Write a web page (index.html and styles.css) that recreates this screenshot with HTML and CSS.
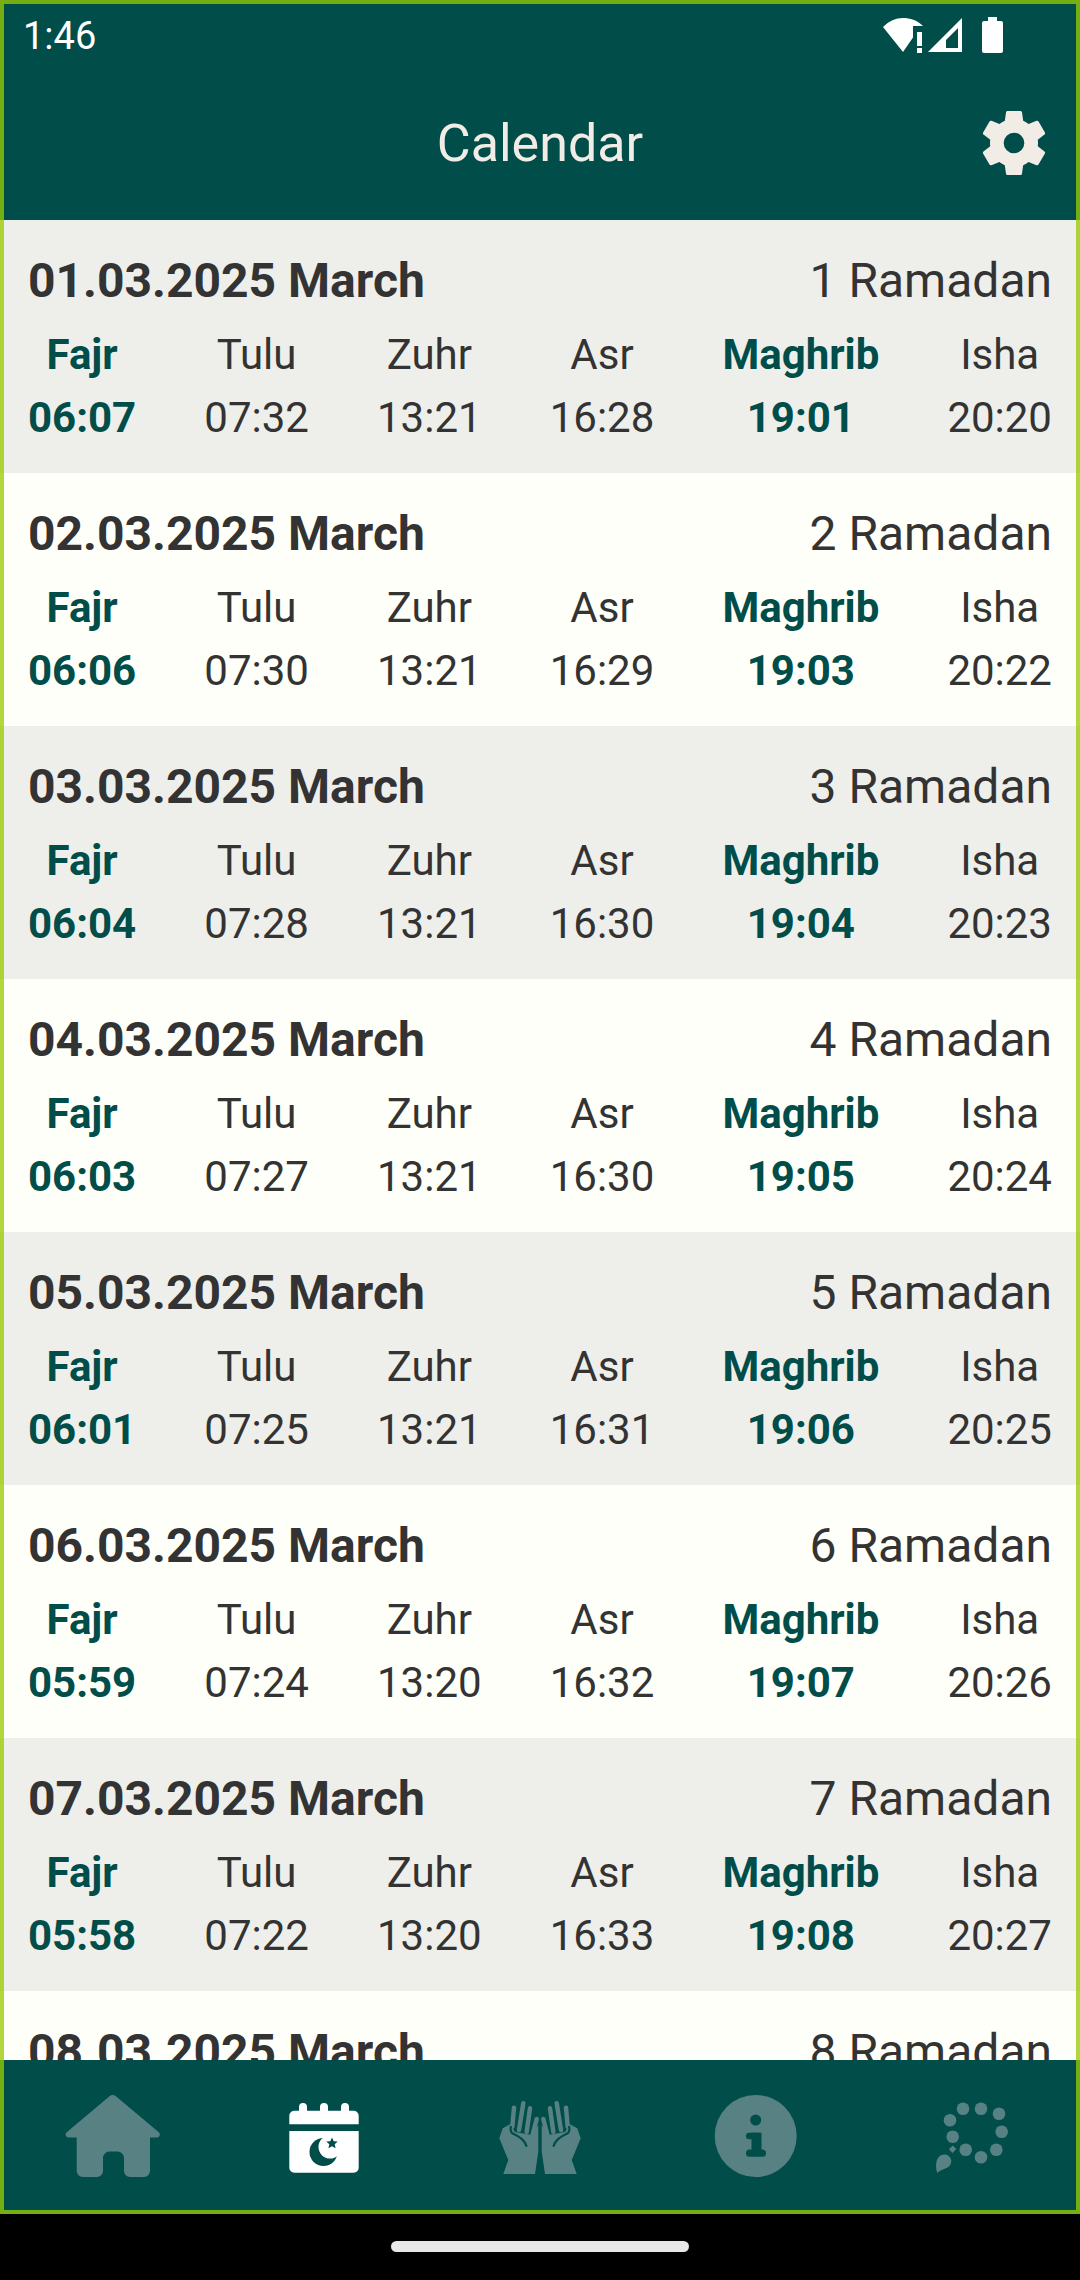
FILE: index.html
```html
<!DOCTYPE html>
<html>
<head>
    <title>Calendar</title>
    <link rel="stylesheet" href="styles.css">
</head>
<body>
    <div class="screen">
        <div class="app">
            <div class="topbar">
                <div class="status">
                    <span class="clock">1:46</span>
                    <div class="status-icons">
                        <svg width="40" height="36" viewBox="0 0 40 36"><path d="M0 10C6 4 13 1 20 1c7 0 14 2 20 8H30v11.500L20 35z" fill="#fff"/><rect x="34" y="15" width="5" height="14" fill="#fff"/><rect x="34" y="31" width="5" height="5" fill="#fff"/></svg>
                        <svg class="signal" width="34" height="36" viewBox="0 0 34 36"><path d="M0 35L34 1v34zM18 31h12V11L18 23z" fill="#fff" fill-rule="evenodd"/></svg>
                        <svg class="battery" width="21" height="36" viewBox="0 0 21 36"><path d="M6 0h9v4h4a2 2 0 0 1 2 2v28a2 2 0 0 1-2 2H2a2 2 0 0 1-2-2V6a2 2 0 0 1 2-2h4z" fill="#fff"/></svg>
                    </div>
                </div>
                <div class="titlebar">
                    <h1>Calendar</h1>
                    <svg class="gear" width="80" height="80" viewBox="0 0 24 24"><path fill-rule="evenodd" d="M19.140 12.940c.04-.3.06-.61.06-.94 0-.32-.02-.64-.07-.94l2.030-1.580c.18-.14.23-.41.12-.61l-1.920-3.320c-.12-.22-.37-.29-.59-.22l-2.390.96c-.5-.38-1.030-.7-1.620-.94l-.36-2.540c-.04-.24-.24-.41-.48-.41h-3.840c-.24 0-.43.17-.47.41l-.36 2.540c-.59.24-1.130.57-1.620.94l-2.390-.96c-.22-.08-.47 0-.59.22L2.740 8.870c-.12.21-.08.47.12.61l2.030 1.580c-.05.3-.09.63-.09.94s.02.64.07.94l-2.030 1.580c-.18.14-.23.41-.12.61l1.920 3.320c.12.22.37.29.59.22l2.390-.96c.5.38 1.030.7 1.620.94l.36 2.540c.05.24.24.41.48.41h3.840c.24 0 .44-.17.47-.41l.36-2.540c.59-.24 1.130-.56 1.620-.94l2.390.96c.22.08.47 0 .59-.22l1.920-3.320c.12-.22.07-.47-.12-.61l-2.010-1.580zM12 15.100a3.100 3.100 0 1 1 0-6.200 3.100 3.100 0 0 1 0 6.200z"/></svg>
                </div>
            </div>

            <div class="list">
                <div class="day">
                    <div class="day-head"><b>01.03.2025 March</b><span>1 Ramadan</span></div>
                    <div class="times">
                        <div class="time on"><span>Fajr</span><span>06:07</span></div>
                        <div class="time"><span>Tulu</span><span>07:32</span></div>
                        <div class="time"><span>Zuhr</span><span>13:21</span></div>
                        <div class="time"><span>Asr</span><span>16:28</span></div>
                        <div class="time on"><span>Maghrib</span><span>19:01</span></div>
                        <div class="time"><span>Isha</span><span>20:20</span></div>
                    </div>
                </div>
                <div class="day">
                    <div class="day-head"><b>02.03.2025 March</b><span>2 Ramadan</span></div>
                    <div class="times">
                        <div class="time on"><span>Fajr</span><span>06:06</span></div>
                        <div class="time"><span>Tulu</span><span>07:30</span></div>
                        <div class="time"><span>Zuhr</span><span>13:21</span></div>
                        <div class="time"><span>Asr</span><span>16:29</span></div>
                        <div class="time on"><span>Maghrib</span><span>19:03</span></div>
                        <div class="time"><span>Isha</span><span>20:22</span></div>
                    </div>
                </div>
                <div class="day">
                    <div class="day-head"><b>03.03.2025 March</b><span>3 Ramadan</span></div>
                    <div class="times">
                        <div class="time on"><span>Fajr</span><span>06:04</span></div>
                        <div class="time"><span>Tulu</span><span>07:28</span></div>
                        <div class="time"><span>Zuhr</span><span>13:21</span></div>
                        <div class="time"><span>Asr</span><span>16:30</span></div>
                        <div class="time on"><span>Maghrib</span><span>19:04</span></div>
                        <div class="time"><span>Isha</span><span>20:23</span></div>
                    </div>
                </div>
                <div class="day">
                    <div class="day-head"><b>04.03.2025 March</b><span>4 Ramadan</span></div>
                    <div class="times">
                        <div class="time on"><span>Fajr</span><span>06:03</span></div>
                        <div class="time"><span>Tulu</span><span>07:27</span></div>
                        <div class="time"><span>Zuhr</span><span>13:21</span></div>
                        <div class="time"><span>Asr</span><span>16:30</span></div>
                        <div class="time on"><span>Maghrib</span><span>19:05</span></div>
                        <div class="time"><span>Isha</span><span>20:24</span></div>
                    </div>
                </div>
                <div class="day">
                    <div class="day-head"><b>05.03.2025 March</b><span>5 Ramadan</span></div>
                    <div class="times">
                        <div class="time on"><span>Fajr</span><span>06:01</span></div>
                        <div class="time"><span>Tulu</span><span>07:25</span></div>
                        <div class="time"><span>Zuhr</span><span>13:21</span></div>
                        <div class="time"><span>Asr</span><span>16:31</span></div>
                        <div class="time on"><span>Maghrib</span><span>19:06</span></div>
                        <div class="time"><span>Isha</span><span>20:25</span></div>
                    </div>
                </div>
                <div class="day">
                    <div class="day-head"><b>06.03.2025 March</b><span>6 Ramadan</span></div>
                    <div class="times">
                        <div class="time on"><span>Fajr</span><span>05:59</span></div>
                        <div class="time"><span>Tulu</span><span>07:24</span></div>
                        <div class="time"><span>Zuhr</span><span>13:20</span></div>
                        <div class="time"><span>Asr</span><span>16:32</span></div>
                        <div class="time on"><span>Maghrib</span><span>19:07</span></div>
                        <div class="time"><span>Isha</span><span>20:26</span></div>
                    </div>
                </div>
                <div class="day">
                    <div class="day-head"><b>07.03.2025 March</b><span>7 Ramadan</span></div>
                    <div class="times">
                        <div class="time on"><span>Fajr</span><span>05:58</span></div>
                        <div class="time"><span>Tulu</span><span>07:22</span></div>
                        <div class="time"><span>Zuhr</span><span>13:20</span></div>
                        <div class="time"><span>Asr</span><span>16:33</span></div>
                        <div class="time on"><span>Maghrib</span><span>19:08</span></div>
                        <div class="time"><span>Isha</span><span>20:27</span></div>
                    </div>
                </div>
                <div class="day">
                    <div class="day-head"><b>08.03.2025 March</b><span>8 Ramadan</span></div>
                </div>
            </div>

            <div class="tabs">
                <svg class="tab" width="110" height="100" viewBox="0 0 110 100"><path d="M56.500 11.300a5 5 0 0 1 6.400 0L105.500 47a3 3 0 0 1-2 5.500H97V86a6 6 0 0 1-6 6H77a6 6 0 0 1-6-6V73a6.500 6.500 0 0 0-6.500-6.500h-8A6.500 6.500 0 0 0 50 73v13a6 6 0 0 1-6 6H29.700a6 6 0 0 1-6-6V52.500H16a3 3 0 0 1-2-5.500z"/></svg>
                <svg class="tab active" width="110" height="100" viewBox="0 0 110 100">
                    <path d="M30 25.700V22a4 4 0 0 1 8 0v3.700h13V22a4 4 0 0 1 8 0v3.700h13V22a4 4 0 0 1 8 0v3.700h4.700a5 5 0 0 1 5 5v8.600H20.300v-8.600a5 5 0 0 1 5-5zM20.300 46h69.400v36.700a5 5 0 0 1-5 5H25.300a5 5 0 0 1-5-5z"/>
                    <circle cx="54.500" cy="67" r="14" fill="#004d4a"/>
                    <circle cx="61" cy="62" r="11.500"/>
                    <path d="M63 52.500l1.700 3.700 4 .4-3 2.700.9 4-3.600-2.100-3.600 2.100.9-4-3-2.700 4-.4z" fill="#004d4a"/>
                </svg>
                <svg class="tab" width="110" height="100" viewBox="0 0 110 100">
                    <g id="hand">
                        <path d="M56.700 40v26.700L60 89h31.700l-5-14 9-21.700-3.400-10L85 39.300 80 47l-17 3z"/>
                        <path class="finger" d="M58.300 34l5 19.300M65 23.300l3.300 23.400M71.700 18.300L76 45M81 22.700l1.700 19"/>
                        <path class="crease" d="M68.300 61.700C71 53 78 51 83 48c2-2 1.500-5 1-7"/>
                    </g>
                    <use href="#hand" transform="translate(110 0) scale(-1 1)"/>
                </svg>
                <svg class="tab" width="110" height="100" viewBox="0 0 110 100">
                    <circle cx="54.700" cy="51" r="41"/>
                    <g fill="#004d4a">
                        <circle cx="54.700" cy="35" r="5.500"/>
                        <rect x="45" y="47.700" width="15" height="6.500" rx="3"/>
                        <rect x="50.500" y="47.700" width="10" height="22"/>
                        <rect x="45" y="64.500" width="20" height="7.200" rx="3.500"/>
                    </g>
                </svg>
                <svg class="tab" width="110" height="100" viewBox="0 0 110 100">
                    <circle cx="46" cy="23.700" r="6.300"/>
                    <circle cx="64" cy="23.700" r="6.300"/>
                    <circle cx="82" cy="28.700" r="6.300"/>
                    <circle cx="84.700" cy="46.700" r="6.300"/>
                    <circle cx="79.300" cy="64.700" r="6.300"/>
                    <circle cx="64" cy="72.300" r="6.300"/>
                    <circle cx="48.700" cy="64.700" r="6.300"/>
                    <circle cx="35.700" cy="51.700" r="6.300"/>
                    <circle cx="33" cy="35.300" r="6.300"/>
                    <path d="M35.700 60.500l3.600 3.600-3.800 3.800-3.600-3.600z"/>
                    <path d="M20.300 88c-2-6-1.500-12 1-15.500 2.500-3.500 8-4 11-1 3 3 2.500 8-1 10.500-3 2-7 2.500-11 6z"/>
                </svg>
            </div>
        </div>
        <div class="gesture-bar"><div class="pill"></div></div>
        <div class="frame"></div>
    </div>
</body>
</html>
```
FILE: styles.css
```css
body {
    margin: 0;
    background: #000;
    font-family: Roboto, sans-serif;
}
.screen {
    position: relative;
    width: 1080px;
    height: 2280px;
    overflow: hidden;
}
.app {
    display: flex;
    flex-direction: column;
    height: 2214px;
}
.topbar {
    height: 220px;
    background: #004d4a;
}
.status {
    display: flex;
    justify-content: space-between;
    align-items: center;
    height: 70px;
    padding: 0 77px 0 23px;
}
.clock {
    color: #fff;
    font-size: 38px;
    padding-top: 2px;
}
.status-icons {
    display: flex;
    align-items: center;
    gap: 5px;
}
.status-icons .battery {
    margin-left: 15px;
}
.titlebar {
    position: relative;
    height: 146px;
    display: flex;
    align-items: center;
    justify-content: center;
}
.titlebar h1 {
    margin: 0;
    color: #f1ede6;
    font-size: 52px;
    font-weight: 400;
}
.gear {
    position: absolute;
    right: 26px;
    top: 33px;
    fill: #f1ede6;
}
.list {
    flex: 1;
    overflow: hidden;
}
.day {
    box-sizing: border-box;
    height: 253px;
    padding: 33px 28px 0;
    background: #eeefeb;
    color: #333;
}
.day:nth-child(even) {
    background: #fefff8;
}
.day-head {
    display: flex;
    justify-content: space-between;
    font-size: 48px;
    line-height: 56px;
}
.times {
    display: flex;
    justify-content: space-between;
    margin-top: 22px;
    font-size: 42px;
}
.time {
    display: flex;
    flex-direction: column;
    align-items: center;
    gap: 15px;
    line-height: 48px;
}
.time.on {
    color: #004d4a;
    font-weight: 700;
}
.tabs {
    flex: none;
    height: 154px;
    display: grid;
    grid-template-columns: repeat(5, 216px);
    justify-items: center;
    align-items: center;
    background: #004d4a;
}
.tab {
    margin-bottom: 4px;
    fill: #578183;
}
.tab.active {
    fill: #fff;
}
.finger {
    fill: none;
    stroke: #578183;
    stroke-width: 4.500;
    stroke-linecap: round;
}
.crease {
    fill: none;
    stroke: #004d4a;
    stroke-width: 2.200;
}
.gesture-bar {
    display: flex;
    justify-content: center;
    padding-top: 27px;
}
.pill {
    width: 298px;
    height: 11px;
    border-radius: 6px;
    background: #e8e8e8;
}
.frame {
    position: absolute;
    left: 0;
    top: 0;
    right: 0;
    height: 2214px;
    box-sizing: border-box;
    border: 4px solid rgba(152, 203, 3, 0.77);
}
```
